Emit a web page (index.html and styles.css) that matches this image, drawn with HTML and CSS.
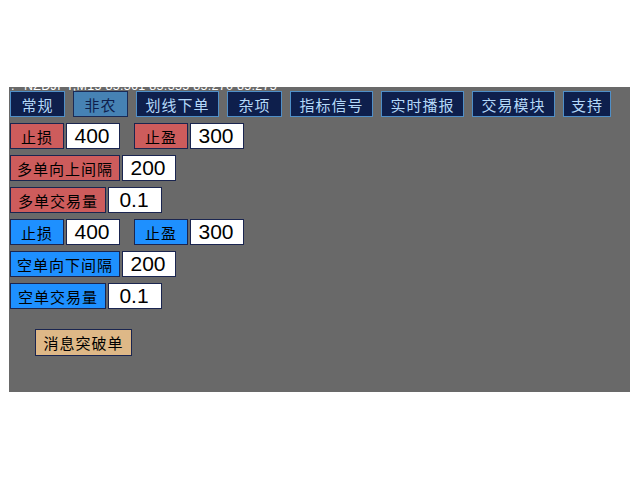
FILE: index.html
```html
<!DOCTYPE html>
<html>
<head>
<meta charset="utf-8">
<link rel="stylesheet" href="styles.css">
</head>
<body>
<div class="panel">
  <div class="ticker"><span class="ticker-mark">.</span><span class="ticker-text">NZDJPY,M15 85.361 85.355 85.270 85.275</span></div>
  <div class="tabs">
    <div class="tab w55">常规</div>
    <div class="tab w55 active">非农</div>
    <div class="tab w83">划线下单</div>
    <div class="tab w55">杂项</div>
    <div class="tab w83">指标信号</div>
    <div class="tab w83">实时播报</div>
    <div class="tab w83">交易模块</div>
    <div class="tab w48">支持</div>
  </div>
  <div class="rows">
    <div class="row">
      <div class="label red w54">止损</div>
      <div class="field">400</div>
      <div class="label red w54 second">止盈</div>
      <div class="field">300</div>
    </div>
    <div class="row">
      <div class="label red w110">多单向上间隔</div>
      <div class="field">200</div>
    </div>
    <div class="row">
      <div class="label red w96">多单交易量</div>
      <div class="field">0.1</div>
    </div>
    <div class="row">
      <div class="label blue w54">止损</div>
      <div class="field">400</div>
      <div class="label blue w54 second">止盈</div>
      <div class="field">300</div>
    </div>
    <div class="row">
      <div class="label blue w110">空单向下间隔</div>
      <div class="field">200</div>
    </div>
    <div class="row">
      <div class="label blue w96">空单交易量</div>
      <div class="field">0.1</div>
    </div>
  </div>
  <div class="news">消息突破单</div>
</div>
</body>
</html>
```
FILE: styles.css
```css
html, body {
  margin: 0;
  padding: 0;
  background: #ffffff;
}
body {
  font-family: "Noto Sans CJK SC", "Liberation Sans", sans-serif;
}
.panel {
  margin: 87px 0 0 9px;
  width: 621px;
  height: 305px;
  background: #696969;
  overflow: hidden;
  padding-left: 1px;
  box-sizing: border-box;
}
.ticker {
  height: 4px;
  overflow: hidden;
  display: flex;
  align-items: flex-end;
  font-family: "Liberation Sans", sans-serif;
  font-size: 12.5px;
  line-height: 10px;
  color: #ffffff;
  white-space: nowrap;
}
.ticker-mark {
  margin-left: 1px;
  width: 13px;
}
.ticker-text {
  letter-spacing: 0.3px;
}
.tabs {
  display: flex;
  gap: 8px;
}
.tab {
  box-sizing: border-box;
  height: 26px;
  background: #0e1f4c;
  border: 1px solid #4f8fc8;
  color: #b4d8f8;
  font-size: 15px;
  letter-spacing: 1px;
  display: flex;
  align-items: center;
  justify-content: center;
}
.tab.active {
  background: #4682b4;
  border-color: #1a2a55;
  color: #0e1f4c;
}
.w48 { width: 48px; }
.w54 { width: 54px; }
.w55 { width: 55px; }
.w83 { width: 83px; }
.w96 { width: 96px; }
.w110 { width: 110px; }
.rows {
  margin-top: 6px;
  display: flex;
  flex-direction: column;
  gap: 6px;
}
.row {
  display: flex;
  gap: 2px;
  height: 26px;
}
.label {
  box-sizing: border-box;
  height: 26px;
  border: 1px solid #1a2550;
  color: #000000;
  font-size: 15px;
  letter-spacing: 1px;
  display: flex;
  align-items: center;
  justify-content: center;
}
.label.red { background: #cd5c5c; }
.label.blue { background: #1e90ff; }
.label.second { margin-left: 12px; }
.field {
  box-sizing: border-box;
  width: 54px;
  height: 26px;
  background: #ffffff;
  border: 1px solid #1a2550;
  font-family: "Liberation Sans", sans-serif;
  font-size: 21px;
  color: #000000;
  display: flex;
  align-items: center;
  justify-content: center;
  padding-right: 2px;
}
.news {
  box-sizing: border-box;
  margin: 20px 0 0 25px;
  width: 97px;
  height: 27px;
  background: #deb887;
  border: 1px solid #1a2550;
  color: #000000;
  font-size: 15px;
  letter-spacing: 1px;
  display: flex;
  align-items: center;
  justify-content: center;
}
```
